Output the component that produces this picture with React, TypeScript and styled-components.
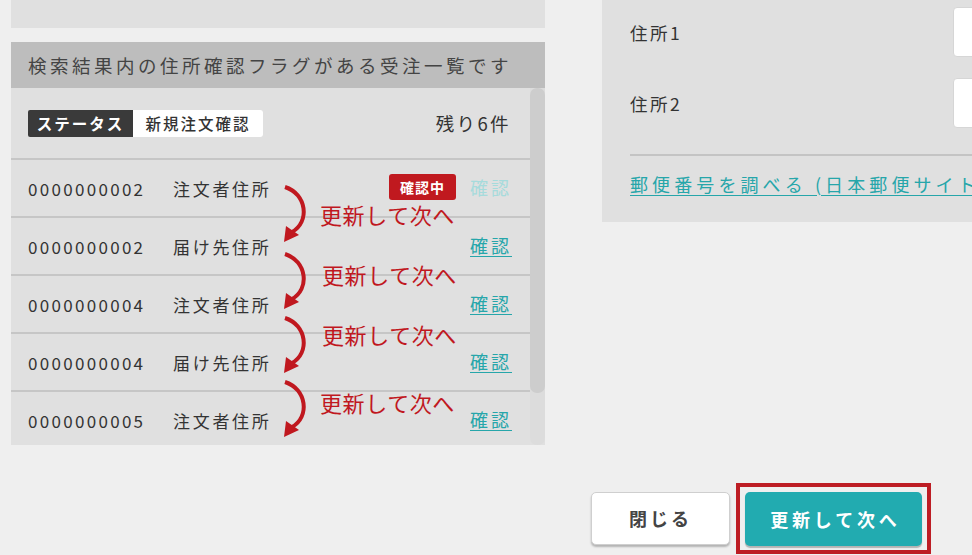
import styled, {createGlobalStyle} from 'styled-components';

interface IOrderRow {
  id: string;
  target: string;
  checking?: boolean;
}

interface INextHint {
  arrowTop: number;
  textTop: number;
  textLeft: number;
}

const ROWS: IOrderRow[] = [
  {id: '0000000002', target: '注文者住所', checking: true},
  {id: '0000000002', target: '届け先住所'},
  {id: '0000000004', target: '注文者住所'},
  {id: '0000000004', target: '届け先住所'},
  {id: '0000000005', target: '注文者住所'}
];

// offsets are relative to the top of the list body
const HINTS: INextHint[] = [
  {arrowTop: 96, textTop: 113, textLeft: 309},
  {arrowTop: 163, textTop: 173, textLeft: 311},
  {arrowTop: 227, textTop: 233, textLeft: 311},
  {arrowTop: 291, textTop: 301, textLeft: 309}
];

const GlobalStyle = createGlobalStyle`
  html, body {
    margin: 0;
    padding: 0;
    background: #efefef;
    font-family: 'Noto Sans CJK JP', 'Noto Sans', sans-serif;
    color: #333;
  }
`;

const Page = styled.div`
  width: 972px;
  height: 555px;
  overflow: hidden;
  display: grid;
  grid-template-columns: 534px 1fr;
  grid-template-rows: auto auto;
  column-gap: 57px;
  padding-left: 11px;
  box-sizing: border-box;
`;

const LeftColumn = styled.div`
  display: flex;
  flex-direction: column;
`;

const TopStub = styled.div`
  height: 28px;
  background: #e0e0e0;
  margin-bottom: 14px;
`;

const ListPanel = styled.section`
  display: flex;
  flex-direction: column;
  height: 403px;
`;

const ListHeader = styled.div`
  height: 46px;
  background: #bdbdbd;
  display: flex;
  align-items: center;
  padding: 0 0 1px 17px;
  box-sizing: border-box;
  font-size: 18.5px;
  letter-spacing: 3.5px;
  color: #444;
`;

const ListBody = styled.div`
  position: relative;
  flex: 1;
  display: flex;
  background: #e0e0e0;
  overflow: hidden;
`;

const ListContent = styled.div`
  flex: 1;
  display: flex;
  flex-direction: column;
`;

const StatusRow = styled.div`
  height: 70px;
  display: flex;
  align-items: center;
  justify-content: space-between;
  padding: 0 19px 0 17px;
  flex-shrink: 0;
`;

const StatusTag = styled.div`
  display: flex;
  height: 27px;
`;

const TagLabel = styled.span<{$dark?: boolean}>`
  display: flex;
  align-items: center;
  justify-content: center;
  width: ${(p) => (p.$dark ? '105px' : '130px')};
  background: ${(p) => (p.$dark ? '#3a3a3a' : '#fff')};
  color: ${(p) => (p.$dark ? '#fff' : '#333')};
  font-size: 15.5px;
  font-weight: ${(p) => (p.$dark ? 700 : 500)};
  letter-spacing: 2px;
  border-radius: ${(p) => (p.$dark ? '2px 0 0 2px' : '0 3px 3px 0')};
`;

const Remaining = styled.span`
  font-size: 18.5px;
  letter-spacing: 2.4px;
  color: #333;
`;

const OrderRow = styled.div`
  height: 58px;
  flex-shrink: 0;
  display: flex;
  align-items: center;
  border-top: 2px solid #c6c6c6;
  box-sizing: border-box;
  padding: 0 21px 0 17px;
  font-size: 17px;
`;

const OrderId = styled.span`
  width: 145px;
  letter-spacing: 2.3px;
`;

const Target = styled.span`
  flex: 1;
  letter-spacing: 2.7px;
`;

const CheckingBadge = styled.span`
  display: flex;
  align-items: center;
  justify-content: center;
  width: 67px;
  height: 26px;
  margin-top: -2px;
  margin-right: 14px;
  background: #c0191f;
  color: #fff;
  font-size: 14px;
  font-weight: 700;
  letter-spacing: 1px;
  border-radius: 3px;
`;

const ConfirmLink = styled.a<{$disabled?: boolean}>`
  font-size: 18px;
  letter-spacing: 3px;
  margin-right: -3px;
  margin-top: -3px;
  color: ${(p) => (p.$disabled ? '#a6dbdc' : '#26a6aa')};
  text-decoration: ${(p) => (p.$disabled ? 'none' : 'underline')};
  text-underline-offset: 3px;
  cursor: pointer;
`;

const ScrollTrack = styled.div`
  width: 15px;
  flex-shrink: 0;
  background: #dcdcdc;
  border-radius: 0 0 7px 7px;
  display: flex;
  flex-direction: column;
`;

const ScrollThumb = styled.div`
  height: 305px;
  background: #cdcdcd;
  border-radius: 7px;
`;

const HintArrow = styled.svg`
  position: absolute;
  left: 270px;
  width: 32px;
  height: 60px;
`;

const HintText = styled.span`
  position: absolute;
  font-size: 22px;
  line-height: 26px;
  letter-spacing: 0.6px;
  color: #c0181f;
  white-space: nowrap;
`;

const RightColumn = styled.div`
  overflow: hidden;
`;

const FormPanel = styled.div`
  height: 222px;
  background: #e0e0e0;
  box-sizing: border-box;
  padding: 7px 0 0 28px;
  display: flex;
  flex-direction: column;
`;

const FieldRow = styled.div`
  display: grid;
  grid-template-columns: 323px 200px;
  align-items: center;
  height: 50px;
  & + & {
    margin-top: 21px;
  }
`;

const FieldLabel = styled.label`
  font-size: 17.5px;
  letter-spacing: 2.5px;
  color: #333;
`;

const FieldInput = styled.div`
  height: 50px;
  background: #fff;
  border: 1px solid #d6d6d6;
  border-radius: 4px;
  box-sizing: border-box;
`;

const Divider = styled.hr`
  margin: 26px 0 0;
  border: none;
  border-top: 2px solid #c4c4c4;
`;

const PostalLink = styled.a`
  margin-top: 15px;
  font-size: 18px;
  letter-spacing: 4.1px;
  white-space: nowrap;
  color: #26a6aa;
  text-decoration: underline;
  text-underline-offset: 3px;
`;

const Footer = styled.div`
  grid-column: 1 / span 2;
  display: flex;
  justify-content: flex-end;
  align-items: center;
  gap: 6px;
  margin-top: 33px;
  padding-right: 41px;
`;

const CloseButton = styled.button`
  width: 139px;
  height: 53px;
  background: #fff;
  border: 1px solid #cfcfcf;
  border-radius: 5px;
  box-shadow: 0 2px 2px rgba(0, 0, 0, 0.25);
  font-family: inherit;
  font-size: 18px;
  font-weight: 700;
  letter-spacing: 3px;
  color: #444;
`;

const Highlight = styled.div`
  border: 4px solid #bd1d24;
  padding: 5px 5px 4px 5px;
`;

const PrimaryButton = styled.button`
  width: 177px;
  height: 54px;
  background: #22abb0;
  border: none;
  border-radius: 5px;
  box-shadow: 0 2px 1px rgba(0, 0, 0, 0.25);
  font-family: inherit;
  font-size: 18px;
  font-weight: 700;
  letter-spacing: 3.8px;
  text-indent: 3.8px;
  color: #fff;
`;

// curved "go to next" arrow drawn between two rows
const NextArrow = ({top}: {top: number}) => (
  <HintArrow style={{top}} viewBox="0 0 32 60">
    <path
      d="M4 3 C26 10 29 38 11 48"
      fill="none"
      stroke="#c0181f"
      strokeWidth={4}
    />
    <polygon points="3,58 5,42 18,51" fill="#c0181f" />
  </HintArrow>
);

const App = () => {
  return (
    <>
      <GlobalStyle />
      <Page>
        <LeftColumn>
          <TopStub />
          <ListPanel>
            <ListHeader>検索結果内の住所確認フラグがある受注一覧です</ListHeader>
            <ListBody>
              <ListContent>
                <StatusRow>
                  <StatusTag>
                    <TagLabel $dark>ステータス</TagLabel>
                    <TagLabel>新規注文確認</TagLabel>
                  </StatusTag>
                  <Remaining>残り6件</Remaining>
                </StatusRow>
                {ROWS.map((row, i) => (
                  <OrderRow key={i}>
                    <OrderId>{row.id}</OrderId>
                    <Target>{row.target}</Target>
                    {row.checking && <CheckingBadge>確認中</CheckingBadge>}
                    <ConfirmLink $disabled={row.checking}>確認</ConfirmLink>
                  </OrderRow>
                ))}
              </ListContent>
              <ScrollTrack>
                <ScrollThumb />
              </ScrollTrack>
              {HINTS.map((hint, i) => (
                <div key={i}>
                  <NextArrow top={hint.arrowTop} />
                  <HintText style={{top: hint.textTop, left: hint.textLeft}}>
                    更新して次へ
                  </HintText>
                </div>
              ))}
            </ListBody>
          </ListPanel>
        </LeftColumn>

        <RightColumn>
          <FormPanel>
            <FieldRow>
              <FieldLabel>住所1</FieldLabel>
              <FieldInput />
            </FieldRow>
            <FieldRow>
              <FieldLabel>住所2</FieldLabel>
              <FieldInput />
            </FieldRow>
            <Divider />
            <PostalLink>郵便番号を調べる (日本郵便サイト)</PostalLink>
          </FormPanel>
        </RightColumn>

        <Footer>
          <CloseButton>閉じる</CloseButton>
          <Highlight>
            <PrimaryButton>更新して次へ</PrimaryButton>
          </Highlight>
        </Footer>
      </Page>
    </>
  );
};

export default App;
